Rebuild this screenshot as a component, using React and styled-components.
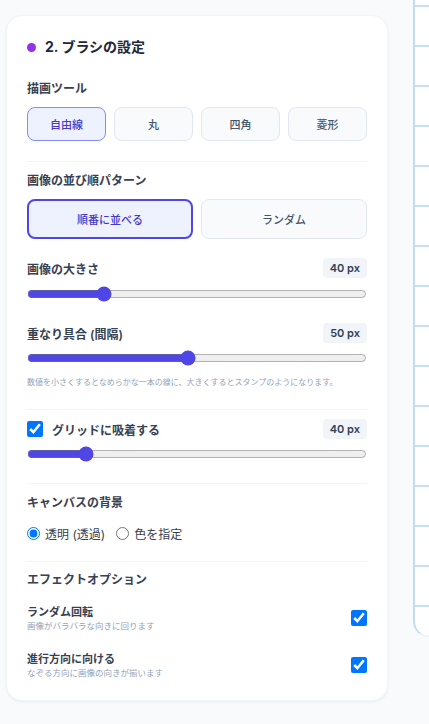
import React from "react";
import styled, { createGlobalStyle } from "styled-components";

const Global = createGlobalStyle`
  html, body { margin: 0; padding: 0; }
  body {
    background: #f8fafc;
    font-family: "Inter", "Noto Sans CJK JP", sans-serif;
    color: #334155;
    overflow: hidden;
  }
`;

const Page = styled.div`
  display: flex;
  align-items: flex-start;
  gap: 25px;
  padding-left: 6px;
  width: 429px;
  height: 724px;
  box-sizing: border-box;
  overflow: hidden;
`;

const Sidebar = styled.aside`
  flex: 0 0 382px;
  padding-top: 15px;
`;

const Card = styled.section`
  background: #ffffff;
  border: 1px solid #f1f5f9;
  border-radius: 16px;
  box-shadow: 0 1px 3px rgba(15, 23, 42, 0.06);
  padding: 21px 20px 21px;
  box-sizing: border-box;
`;

const Title = styled.h2`
  display: flex;
  align-items: center;
  gap: 9px;
  margin: 0 0 22px;
  font-size: 14px;
  line-height: 20px;
  font-weight: 700;
  color: #1e293b;
  &::before {
    content: "";
    width: 9px;
    height: 9px;
    border-radius: 50%;
    background: #9333ea;
  }
`;

const Label = styled.div`
  font-size: 12px;
  line-height: 20px;
  font-weight: 600;
  color: #374151;
  margin-top: ${(p) => p.$mt || 0}px;
  margin-bottom: ${(p) => p.$mb || 0}px;
`;

const ButtonGrid = styled.div`
  display: grid;
  grid-template-columns: repeat(${(p) => p.$cols}, 1fr);
  gap: 8px;
`;

const OptionButton = styled.button`
  height: ${(p) => p.$h}px;
  border-radius: 8px;
  font-family: inherit;
  font-size: 11px;
  font-weight: 500;
  cursor: pointer;
  box-sizing: border-box;
  background: ${(p) => (p.$active ? "#eef2ff" : "#f8fafc")};
  color: ${(p) => (p.$active ? "#4338ca" : "#475569")};
  border: ${(p) =>
    p.$active
      ? `${p.$thick ? 2 : 1.5}px solid ${p.$thick ? "#4f46e5" : "#818cf8"}`
      : "1px solid #e2e8f0"};
`;

const Divider = styled.hr`
  border: none;
  height: 1px;
  background: #f1f5f9;
  margin: ${(p) => p.$top}px 0 ${(p) => p.$bottom}px;
`;

const ValueRow = styled.div`
  display: flex;
  align-items: center;
  justify-content: space-between;
  height: 20px;
  margin-top: ${(p) => p.$mt || 0}px;
`;

const RowLabel = styled.span`
  display: flex;
  align-items: center;
  gap: 9px;
  font-size: 12px;
  font-weight: 600;
  color: #374151;
`;

const Badge = styled.span`
  background: #f1f5f9;
  border-radius: 4px;
  padding: 0 7px;
  height: 20px;
  line-height: 20px;
  font-size: 11px;
  font-weight: 600;
  color: #334155;
`;

const Range = styled.input.attrs({ type: "range" })`
  display: block;
  width: 100%;
  height: 16px;
  margin: ${(p) => p.$mt || 0}px 0 0;
  accent-color: #4f46e5;
`;

const Hint = styled.p`
  margin: 10px 0 0;
  font-size: 8px;
  line-height: 12px;
  color: #94a3b8;
`;

const Check = styled.input.attrs({ type: "checkbox" })`
  width: 16px;
  height: 16px;
  margin: 0;
  accent-color: #0075ff;
`;

const RadioRow = styled.div`
  display: flex;
  align-items: center;
  gap: 11px;
  height: 20px;
  margin-top: 10px;
`;

const RadioLabel = styled.label`
  display: flex;
  align-items: center;
  gap: 5px;
  font-size: 12px;
  color: #374151;
  input {
    width: 13px;
    height: 13px;
    margin: 0;
  }
`;

const EffectItem = styled.div`
  display: flex;
  align-items: center;
  justify-content: space-between;
  margin-top: ${(p) => p.$mt}px;
`;

const EffectText = styled.div`
  display: flex;
  flex-direction: column;
`;

const EffectTitle = styled.span`
  font-size: 11px;
  line-height: 16px;
  font-weight: 700;
  color: #374151;
`;

const EffectSub = styled.span`
  font-size: 8.5px;
  line-height: 12px;
  color: #94a3b8;
`;

const Canvas = styled.div`
  flex: 1;
  height: 636px;
  background-color: #ffffff;
  border-left: 2px solid #c3dcf1;
  border-bottom: 1px solid #e8eef5;
  border-bottom-left-radius: 16px;
  background-image: linear-gradient(to bottom, #c9e0f3 2px, transparent 2px);
  background-size: 40px 40px;
  background-position: 0 5px;
`;

const tools = ["自由線", "丸", "四角", "菱形"];

export default function App() {
  return (
    <>
      <Global />
      <Page>
        <Sidebar>
          <Card>
            <Title>2. ブラシの設定</Title>

            <Label $mb={8}>描画ツール</Label>
            <ButtonGrid $cols={4}>
              {tools.map((t, i) => (
                <OptionButton key={t} $h={34} $active={i === 0}>
                  {t}
                </OptionButton>
              ))}
            </ButtonGrid>

            <Divider $top={20} $bottom={9} />

            <Label $mb={8}>画像の並び順パターン</Label>
            <ButtonGrid $cols={2}>
              <OptionButton $h={40} $active $thick>
                順番に並べる
              </OptionButton>
              <OptionButton $h={40}>ランダム</OptionButton>
            </ButtonGrid>

            <ValueRow $mt={19}>
              <RowLabel>画像の大きさ</RowLabel>
              <Badge>40 px</Badge>
            </ValueRow>
            <Range $mt={8} min={10} max={150} defaultValue={40} />

            <ValueRow $mt={21}>
              <RowLabel>重なり具合 (間隔)</RowLabel>
              <Badge>50 px</Badge>
            </ValueRow>
            <Range $mt={7} min={5} max={100} defaultValue={50} />
            <Hint>
              数値を小さくするとなめらかな一本の線に、大きくするとスタンプのようになります。
            </Hint>

            <Divider $top={21} $bottom={9} />

            <ValueRow>
              <RowLabel>
                <Check defaultChecked />
                グリッドに吸着する
              </RowLabel>
              <Badge>40 px</Badge>
            </ValueRow>
            <Range $mt={7} min={10} max={200} defaultValue={40} />

            <Divider $top={21} $bottom={9} />

            <Label>キャンバスの背景</Label>
            <RadioRow>
              <RadioLabel>
                <input type="radio" name="bg" defaultChecked />
                透明 (透過)
              </RadioLabel>
              <RadioLabel>
                <input type="radio" name="bg" />
                色を指定
              </RadioLabel>
            </RadioRow>

            <Divider $top={18} $bottom={8} />

            <Label>エフェクトオプション</Label>
            <EffectItem $mt={14}>
              <EffectText>
                <EffectTitle>ランダム回転</EffectTitle>
                <EffectSub>画像がバラバラな向きに回ります</EffectSub>
              </EffectText>
              <Check defaultChecked />
            </EffectItem>
            <EffectItem $mt={19}>
              <EffectText>
                <EffectTitle>進行方向に向ける</EffectTitle>
                <EffectSub>なぞる方向に画像の向きが揃います</EffectSub>
              </EffectText>
              <Check defaultChecked />
            </EffectItem>
          </Card>
        </Sidebar>
        <Canvas />
      </Page>
    </>
  );
}
